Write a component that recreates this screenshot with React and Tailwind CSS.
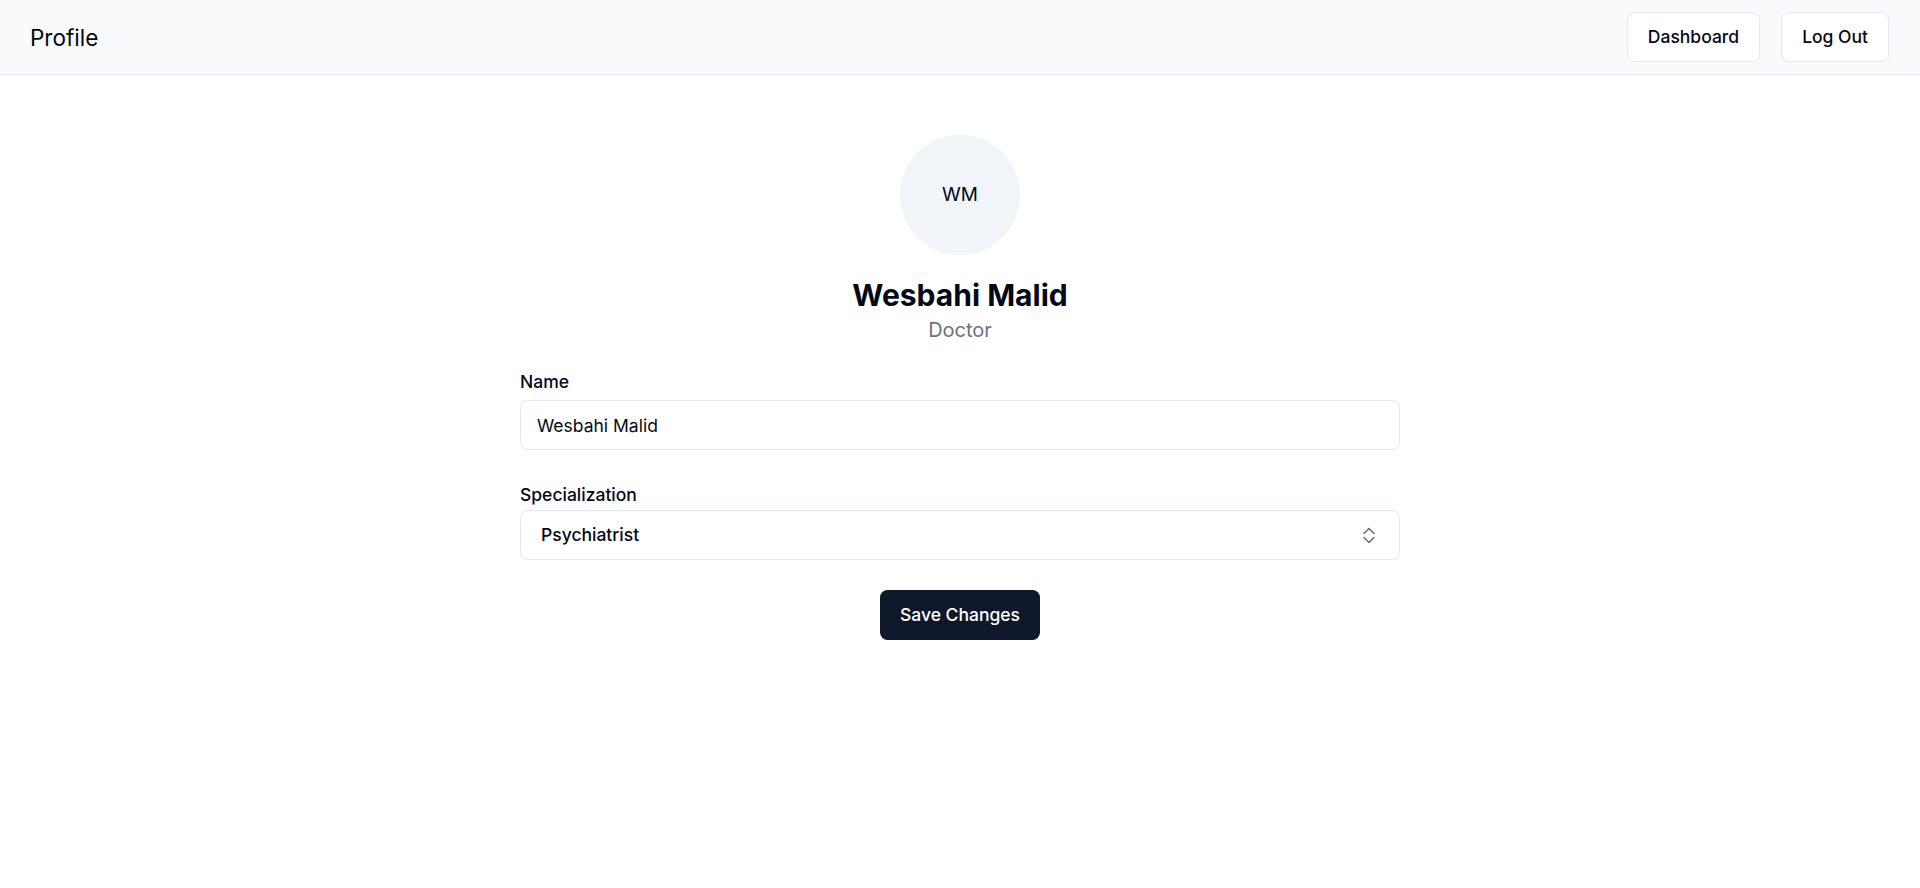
import React, { useState } from 'react';

function UpDownIcon() {
  return (
    <svg width="14" height="18" viewBox="0 0 14 18" fill="none" stroke="#6b7280" strokeWidth="1.6" strokeLinecap="round" strokeLinejoin="round">
      <path d="M2 7.5l5-5 5 5" />
      <path d="M2 11.5l5 5 5-5" />
    </svg>
  );
}

function App() {
  const [name, setName] = useState('Wesbahi Malid');
  const [spec, setSpec] = useState('Psychiatrist');

  return (
    <div className="min-h-screen bg-white font-['Inter',sans-serif] text-[#020817]">
      {/* Top bar */}
      <header className="flex h-[75px] items-center justify-between border-b border-[#e2e8f0] bg-[#f9fafb] pl-[30px] pr-[31px]">
        <h1 className="text-[22.5px] leading-[35px]">Profile</h1>
        <div className="flex gap-[21px]">
          <button className="h-[50px] rounded-[7.5px] border border-[#e2e8f0] bg-white px-5 text-[17.5px] font-medium">
            Dashboard
          </button>
          <button className="h-[50px] rounded-[7.5px] border border-[#e2e8f0] bg-white px-5 text-[17.5px] font-medium">
            Log Out
          </button>
        </div>
      </header>

      <main className="mx-auto flex w-[880px] flex-col items-center pt-[60px]">
        <div className="flex h-[120px] w-[120px] items-center justify-center rounded-full bg-[#f1f5f9] text-[19px]">
          WM
        </div>
        <h2 className="mt-5 text-[30px] font-bold leading-[40px]">{name}</h2>
        <p className="text-[20px] leading-[30px] text-[#6b7280]">Doctor</p>

        <div className="mt-6 flex w-full flex-col gap-[6px]">
          <label className="text-[17.5px] font-medium leading-[25px]">Name</label>
          <input
            value={name}
            onChange={(e) => setName(e.target.value)}
            className="h-[50px] w-full rounded-[7.5px] border border-[#e2e8f0] bg-white px-4 text-[17.5px] outline-none"
          />
        </div>

        <div className="mt-8 flex w-full flex-col gap-[3px]">
          <label className="text-[17.5px] font-medium leading-[25px]">Specialization</label>
          <div className="flex h-[50px] w-full items-center justify-between rounded-[7.5px] border border-[#e2e8f0] bg-white pl-[20px] pr-[23px]">
            <span className="text-[17.5px] font-medium">{spec}</span>
            <UpDownIcon />
          </div>
        </div>

        <button
          onClick={() => setSpec(spec)}
          className="mt-[30px] h-[50px] rounded-[7.5px] bg-[#0f172a] px-5 text-[17.5px] font-medium text-white"
        >
          Save Changes
        </button>
      </main>
    </div>
  );
}

export default App;
